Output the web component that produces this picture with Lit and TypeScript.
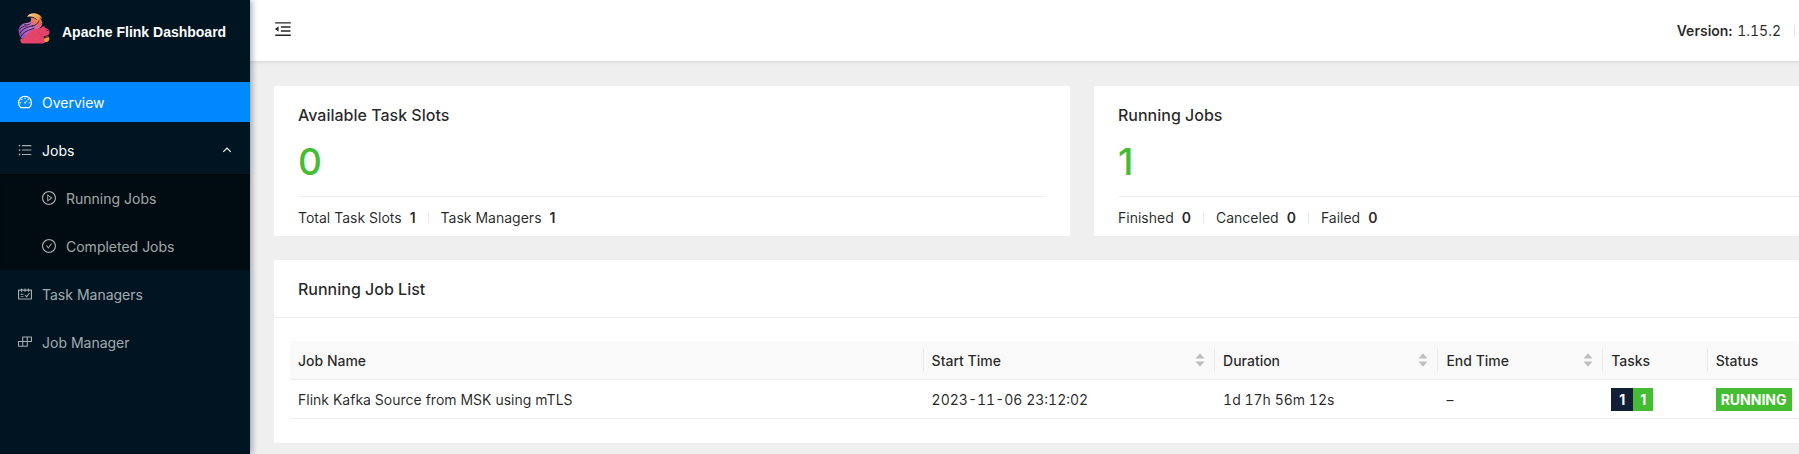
import { LitElement, html, css, svg } from "lit";
import { customElement, property, state } from "lit/decorators.js";

const RING =
  "M512 64C264.6 64 64 264.6 64 512s200.6 448 448 448 448-200.6 448-448S759.4 64 512 64zm0 820c-205.4 0-372-166.6-372-372s166.6-372 372-372 372 166.6 372 372-166.6 372-372 372z";

const ICONS: Record<string, unknown> = {
  dashboard: svg`<path d="M924.8 385.6a446.7 446.7 0 00-96-142.4 446.7 446.7 0 00-142.4-96C631.1 123.8 572.5 112 512 112s-119.1 11.8-174.4 35.2a446.7 446.7 0 00-142.4 96 446.7 446.7 0 00-96 142.4C75.8 440.9 64 499.5 64 560c0 132.7 58.3 257.7 159.9 343.1l1.7 1.4c5.8 4.8 13.1 7.5 20.6 7.5h531.7c7.5 0 14.8-2.7 20.6-7.5l1.7-1.4C901.7 817.7 960 692.7 960 560c0-60.5-11.9-119.1-35.2-174.4zM761.4 836H262.6A371.12 371.12 0 01140 560c0-99.4 38.7-192.8 109-263 70.3-70.3 163.7-109 263-109 99.4 0 192.8 38.7 263 109 70.3 70.3 109 163.7 109 263 0 105.6-44.5 205.5-122.6 276zM623.5 421.5a8.03 8.03 0 00-11.3 0L527.7 506c-18.7-5-39.4-.2-54.1 14.5a55.95 55.95 0 000 79.2 55.95 55.95 0 0079.2 0 55.87 55.87 0 0014.5-54.1l84.5-84.5c3.1-3.1 3.1-8.2 0-11.3l-28.3-28.3zM490 320h44c4.4 0 8-3.6 8-8v-80c0-4.4-3.6-8-8-8h-44c-4.4 0-8 3.6-8 8v80c0 4.4 3.6 8 8 8zm260 218v44c0 4.4 3.6 8 8 8h80c4.4 0 8-3.6 8-8v-44c0-4.4-3.6-8-8-8h-80c-4.4 0-8 3.6-8 8zm12.7-197.2l-31.1-31.1a8.03 8.03 0 00-11.3 0l-56.6 56.6a8.03 8.03 0 000 11.3l31.1 31.1c3.1 3.1 8.2 3.1 11.3 0l56.6-56.6c3.1-3.1 3.1-8.2 0-11.3zm-458.6-31.1a8.03 8.03 0 00-11.3 0l-31.1 31.1a8.03 8.03 0 000 11.3l56.6 56.6c3.1 3.1 8.2 3.1 11.3 0l31.1-31.1c3.1-3.1 3.1-8.2 0-11.3l-56.6-56.6zM262 530h-80c-4.4 0-8 3.6-8 8v44c0 4.4 3.6 8 8 8h80c4.4 0 8-3.6 8-8v-44c0-4.4-3.6-8-8-8z"/>`,
  bars: svg`<path d="M320 192h600v72H320zM320 476h600v72H320zM320 760h600v72H320zM104 228a56 56 0 10112 0 56 56 0 10-112 0zm0 284a56 56 0 10112 0 56 56 0 10-112 0zm0 284a56 56 0 10112 0 56 56 0 10-112 0z"/>`,
  play: svg`<path d=${RING}/><path d="M719.4 499.1l-296.1-215A15.9 15.9 0 00398 297v430c0 13.1 14.8 20.5 25.3 12.9l296.1-215a15.9 15.9 0 000-25.8zm-257.6 134V390.9L628.5 512 461.8 633.1z"/>`,
  check: svg`<path d=${RING}/><path d="M699 353h-46.9c-10.2 0-19.9 4.9-25.9 13.3L469 584.3l-71.2-98.8c-6-8.3-15.6-13.3-25.9-13.3H325c-6.5 0-10.3 7.4-6.5 12.7l124.6 172.8a31.8 31.8 0 0051.7 0l210.6-292c3.9-5.3.1-12.7-6.4-12.7z"/>`,
  schedule: svg`<path d="M928 224H768v-64h-72v64H548v-64h-72v64H328v-64h-72v64H96c-17.7 0-32 14.3-32 32v576c0 17.7 14.3 32 32 32h832c17.7 0 32-14.3 32-32V256c0-17.7-14.3-32-32-32zm-40 568H136V296h120v64h72v-64h148v64h72v-64h148v64h72v-64h120v496zM416 496H232v56h184zM416 632H232v56h184zM815 452h-45a32 32 0 00-26 13L616 643l-53-73a32 32 0 00-26-13h-45c-6 0-10 7-6 13l104 144a32 32 0 0052 0l180-249c4-6 0-13-7-13z"/>`,
  build: svg`<path fill-rule="evenodd" d="M928 160H364c-17.700 0-32 14.300-32 32v252H96c-17.700 0-32 14.300-32 32v308c0 17.700 14.300 32 32 32h564c17.700 0 32-14.300 32-32V512h236c17.700 0 32-14.300 32-32V192c0-17.700-14.300-32-32-32zM332 748H132V512h200zM624 748H400V512h224zM624 444H400V228h224zM892 444H692V228h200z"/>`,
  fold: svg`<path d="M408 442h480c4.400 0 8-3.600 8-8v-56c0-4.400-3.600-8-8-8H408c-4.400 0-8 3.600-8 8v56c0 4.400 3.600 8 8 8zm-8 204c0 4.400 3.600 8 8 8h480c4.400 0 8-3.600 8-8v-56c0-4.400-3.600-8-8-8H408c-4.400 0-8 3.600-8 8v56zm504-486H120c-4.400 0-8 3.600-8 8v56c0 4.400 3.600 8 8 8h784c4.400 0 8-3.600 8-8v-56c0-4.400-3.600-8-8-8zm0 632H120c-4.400 0-8 3.600-8 8v56c0 4.400 3.600 8 8 8h784c4.400 0 8-3.600 8-8v-56c0-4.400-3.600-8-8-8zM115.400 518.900L271.700 642c5.800 4.600 14.400.5 14.400-6.900V388.900c0-7.400-8.500-11.500-14.400-6.900L115.400 505.100a8.740 8.740 0 000 13.800z"/>`,
  chevron: svg`<path d="M132 700L512 320l380 380" fill="none" stroke="currentColor" stroke-width="110"/>`,
  caretUp: svg`<path d="M858.900 689L530.500 308.200c-9.400-10.900-27.500-10.900-37 0L165.100 689c-12.200 14.200-1.200 35 18.500 35h656.800c19.700 0 30.700-20.800 18.500-35z"/>`,
  caretDown: svg`<path d="M840.400 300H183.600c-19.700 0-30.700 20.800-18.500 35l328.400 380.800c9.400 10.900 27.500 10.900 37 0L858.900 335c12.200-14.200 1.200-35-18.500-35z"/>`,
};

@customElement("ui-icon")
class UiIcon extends LitElement {
  @property() name = "";
  static styles = css`
    :host {
      display: inline-flex;
      width: 16px;
      height: 16px;
      flex: none;
    }
    svg {
      width: 100%;
      height: 100%;
      fill: currentColor;
    }
  `;
  render() {
    return html`<svg viewBox="0 0 1024 1024" aria-hidden="true">${ICONS[this.name]}</svg>`;
  }
}

@customElement("flink-logo")
class FlinkLogo extends LitElement {
  static styles = css`
    :host {
      display: block;
      width: 32px;
      height: 32px;
      flex: none;
    }
    svg {
      display: block;
      width: 100%;
      height: 100%;
    }
  `;
  render() {
    return html`<svg viewBox="0 0 64 64" role="img" aria-label="Flink">
      <defs>
        <linearGradient id="tail" x1="0" y1="0.8" x2="1" y2="0.1">
          <stop offset="0" stop-color="#8a48b4" />
          <stop offset="0.5" stop-color="#c07ad6" />
          <stop offset="0.8" stop-color="#e0607a" />
          <stop offset="1" stop-color="#ef7a52" />
        </linearGradient>
        <linearGradient id="tip" x1="0" y1="0" x2="1" y2="0.7">
          <stop offset="0" stop-color="#f8dca0" />
          <stop offset="0.6" stop-color="#f2a14c" />
          <stop offset="1" stop-color="#dd5f3c" />
        </linearGradient>
      </defs>
      <path d="M8 54C1 47-1 36 4 29c4-6 11-7 18-8 4-1 5-5 3-10l18 2c6 4 7 10 4 15-3 6-12 8-19 13-8 5-10 13-20 13z" fill="url(#tail)" />
      <path d="M18 10C20 4 28 1 36 3c6 1 11 5 12 11l-4-2c4 5 5 10 2 15l-5-7c0 4-1 7-4 9 0-7-2-13-6-16-4-3-8-4-13-3z" fill="url(#tip)" />
      <path d="M26 13c5 5 5 11 1 15 4-1 8-4 9-9 0-4-4-7-10-6z" fill="#ef7a46" />
      <path d="M4 43c4-10 14-12 26-16M6 49c5-10 14-12 27-17M13 25c5 2 9 1 12-2M27 29c8-2 13-6 15-12M19 11c6-2 13-1 18 4M3 35c3-5 8-7 14-7" fill="none" stroke="#2a1838" stroke-width="2" />
      <path d="M12 63c-6 0-8-4-7-9 6 0 10-4 13-9 5-7 13-12 24-12 4 0 5-2 7-4 3-1 5 0 5 3 6 1 10 4 9 9 0 5-4 7-9 7-3 0-3 2-2 4 4 5 3 11-2 11z" fill="#e6436a" />
      <path d="M41 40c1 3 3 5 8 6M46 50c3 0 5 1 7 3" fill="none" stroke="#b02f58" stroke-width="1" />
      <path d="M57 37h4" stroke="#2a1020" stroke-width="2" />
      <path d="M52 55c1-6 6-8 10-5 2 4 0 9-4 10-4 1-6-1-6-5z" fill="#ee9a3a" />
      <path d="M52 53c2-5 7-6 11-3z" fill="#5b2a20" />
    </svg>`;
  }
}

@customElement("side-menu")
class SideMenu extends LitElement {
  @state() private open = true;

  static styles = css`
    :host {
      display: block;
      background: #001421;
      border-bottom: 1px solid #000c17;
      box-shadow: 2px 0 6px rgba(0, 21, 41, 0.35);
      box-sizing: border-box;
      z-index: 2;
    }
    .brand {
      display: flex;
      align-items: center;
      gap: 12px;
      height: 62px;
      padding: 0 18px;
      margin: 0 0 16px;
      box-sizing: border-box;
      color: #fff;
      text-decoration: none;
      font: 700 14px/22px "Liberation Sans", Arial, sans-serif;
    }
    .brand-logo {
      margin-top: -6px;
    }
    .brand-name {
      padding-top: 2px;
    }
    ul {
      list-style: none;
      margin: 0;
      padding: 0;
    }
    .row {
      padding: 4px 0;
    }
    .item {
      display: flex;
      align-items: center;
      gap: 9px;
      width: 100%;
      height: 40px;
      padding: 0 18px 0 17px;
      border: 0;
      box-sizing: border-box;
      background: none;
      color: rgba(255, 255, 255, 0.65);
      font: 400 14px/22px Inter, sans-serif;
      text-align: left;
      text-decoration: none;
      cursor: pointer;
    }
    .label {
      padding-top: 2px;
    }
    .item.selected {
      background: #0088ff;
      color: #fff;
    }
    .item.parent .label {
      flex: 1;
      color: #fff;
    }
    .arrow {
      width: 10px;
      height: 10px;
      color: #fff;
    }
    .sub {
      background: #000c11;
      box-shadow: inset 0 4px 4px -3px rgba(0, 0, 0, 0.45);
    }
    .sub .item {
      padding-left: 41px;
    }
  `;

  private link(icon: string, label: string, selected = false) {
    return html`<li class="row">
      <a class="item ${selected ? "selected" : ""}" href="#"><ui-icon name=${icon}></ui-icon><span class="label">${label}</span></a>
    </li>`;
  }

  render() {
    return html`
      <a class="brand" href="#"><flink-logo class="brand-logo"></flink-logo><span class="brand-name">Apache Flink Dashboard</span></a>
      <nav aria-label="Main">
        <ul>
          ${this.link("dashboard", "Overview", true)}
          <li>
            <div class="row">
              <button class="item parent" aria-expanded=${this.open} @click=${() => (this.open = !this.open)}>
                <ui-icon name="bars"></ui-icon><span class="label">Jobs</span><ui-icon class="arrow" name="chevron"></ui-icon>
              </button>
            </div>
            ${this.open ? html`<ul class="sub">${this.link("play", "Running Jobs")}${this.link("check", "Completed Jobs")}</ul>` : ""}
          </li>
          ${this.link("schedule", "Task Managers")} ${this.link("build", "Job Manager")}
        </ul>
      </nav>
    `;
  }
}

@customElement("stat-card")
class StatCard extends LitElement {
  @property() heading = "";
  @property({ type: Number }) value = 0;
  @property({ attribute: false }) details: [string, number][] = [];

  static styles = css`
    :host {
      display: block;
      background: #fff;
      border-radius: 2px;
      padding: 17px 24px 7px;
    }
    h2 {
      margin: 0;
      font-size: 16px;
      font-weight: 500;
      line-height: 24px;
    }
    .value {
      margin: 10px 0 9px;
      color: #44bd32;
      font-size: 37px;
      font-weight: 500;
      line-height: 50px;
    }
    .details {
      display: flex;
      align-items: center;
      border-top: 1px solid #eeeeee;
      padding-top: 10px;
      line-height: 22px;
    }
    .detail {
      display: flex;
      align-items: center;
    }
    .detail + .detail::before {
      content: "";
      width: 1px;
      height: 12px;
      margin: 0 12px;
      background: #eaeaea;
    }
    strong {
      margin-left: 8px;
      font-weight: 600;
    }
  `;

  render() {
    return html`
      <h2>${this.heading}</h2>
      <div class="value">${this.value}</div>
      <div class="details">
        ${this.details.map(([label, count]) => html`<span class="detail">${label}<strong>${count}</strong></span>`)}
      </div>
    `;
  }
}

@customElement("job-list")
class JobList extends LitElement {
  static styles = css`
    :host {
      display: block;
      background: #fff;
      border-radius: 2px;
    }
    h2 {
      margin: 0 0 -1px;
      padding: 17px 24px 16px;
      border-bottom: 1px solid #eeeeee;
      font-size: 16px;
      font-weight: 500;
      line-height: 24px;
    }
    .body {
      padding: 24px 16px;
    }
    table {
      width: 100%;
      table-layout: fixed;
      border-collapse: separate;
      border-spacing: 0;
    }
    .name {
      width: 40%;
    }
    .start {
      width: 18.4%;
    }
    .duration {
      width: 14.1%;
    }
    .end {
      width: 10.4%;
    }
    .tasks {
      width: 6.6%;
    }
    .state {
      width: 10.5%;
    }
    th,
    td {
      padding: 8px;
      border-bottom: 1px solid #eeeeee;
      line-height: 22px;
      text-align: left;
      white-space: nowrap;
    }
    td {
      padding: 9px 8px 7px;
    }
    td.badge-cell {
      padding: 8px 8px 7px;
    }
    .time {
      font-variant-numeric: tabular-nums;
    }
    th {
      padding-right: 0;
      background: #f9f9f9;
      font-weight: 500;
    }
    .head {
      display: flex;
      align-items: center;
      justify-content: space-between;
      height: 22px;
      padding-right: 8px;
      border-right: 1px solid #e8e8e8;
    }
    .title {
      padding-top: 2px;
    }
    th:last-child .head {
      border: 0;
    }
    .sort {
      display: flex;
      flex-direction: column;
      align-items: center;
      padding: 0;
      border: 0;
      background: none;
      color: #bfbfbf;
      cursor: pointer;
    }
    .caret {
      width: 12px;
      height: 12px;
    }
    .caret + .caret {
      margin-top: -4px;
    }
    .badges {
      display: flex;
    }
    .badge {
      padding: 1px 7px 0;
      background: #44bd32;
      color: #fff;
      font-weight: 700;
      line-height: 22px;
    }
    .badge.total {
      padding: 1px 8px 0;
      background: #112036;
    }
    .badge.status {
      padding: 1px 5px 0;
    }
  `;

  private column(label: string, sortable = false) {
    return html`<th scope="col">
      <div class="head">
        <span class="title">${label}</span>
        ${sortable
          ? html`<button class="sort" aria-label="Sort by ${label}">
              <ui-icon class="caret" name="caretUp"></ui-icon><ui-icon class="caret" name="caretDown"></ui-icon>
            </button>`
          : ""}
      </div>
    </th>`;
  }

  render() {
    return html`
      <h2>Running Job List</h2>
      <div class="body">
        <table>
          <colgroup>
            <col class="name" /><col class="start" /><col class="duration" /><col class="end" /><col class="tasks" /><col class="state" />
          </colgroup>
          <thead>
            <tr>
              ${this.column("Job Name")} ${this.column("Start Time", true)} ${this.column("Duration", true)}
              ${this.column("End Time", true)} ${this.column("Tasks")} ${this.column("Status")}
            </tr>
          </thead>
          <tbody>
            <tr>
              <td>Flink Kafka Source from MSK using mTLS</td>
              <td class="time">2023-11-06 23:12:02</td>
              <td class="time">1d 17h 56m 12s</td>
              <td class="time">–</td>
              <td class="badge-cell"><div class="badges"><span class="badge total">1</span><span class="badge">1</span></div></td>
              <td class="badge-cell"><div class="badges"><span class="badge status">RUNNING</span></div></td>
            </tr>
          </tbody>
        </table>
      </div>
    `;
  }
}

@customElement("app-root")
class AppRoot extends LitElement {
  static styles = css`
    :host {
      display: block;
      overflow: hidden;
      color: rgba(0, 0, 0, 0.85);
      font: 400 14px/22px Inter, sans-serif;
    }
    /* The dashboard is wider than the viewport and runs past its right edge. */
    .layout {
      display: grid;
      grid-template-columns: 250px minmax(0, 1fr);
      width: calc(100% + 115px);
      min-height: 100vh;
      background: #efefef;
    }
    .page {
      display: flex;
      flex-direction: column;
    }
    header {
      display: flex;
      align-items: center;
      justify-content: space-between;
      height: 61px;
      padding: 0 119px 0 23px;
      background: #fff;
      box-shadow: 0 1px 4px rgba(0, 21, 41, 0.12);
    }
    .toggle {
      display: flex;
      padding: 0;
      border: 0;
      margin-bottom: 4px;
      background: none;
      color: rgba(0, 0, 0, 0.85);
      cursor: pointer;
    }
    .toggle ui-icon {
      width: 20px;
      height: 20px;
    }
    .version {
      display: flex;
      align-items: center;
      gap: 5px;
      font-variant-numeric: tabular-nums;
    }
    .version b {
      font-weight: 600;
    }
    .version::after {
      content: "";
      width: 1px;
      height: 12px;
      margin-left: 8px;
      background: #e8e8e8;
    }
    main {
      display: grid;
      grid-template-columns: 1fr 1fr;
      gap: 24px;
      padding: 25px 24px 11px;
    }
    job-list {
      grid-column: 1 / -1;
    }
  `;

  render() {
    return html`
      <div class="layout">
        <side-menu></side-menu>
        <div class="page">
          <header>
            <button class="toggle" aria-label="Collapse menu"><ui-icon name="fold"></ui-icon></button>
            <div class="version"><b>Version:</b><span>1.15.2</span></div>
          </header>
          <main>
            <stat-card heading="Available Task Slots" .value=${0} .details=${[["Total Task Slots", 1], ["Task Managers", 1]]}></stat-card>
            <stat-card heading="Running Jobs" .value=${1} .details=${[["Finished", 0], ["Canceled", 0], ["Failed", 0]]}></stat-card>
            <job-list></job-list>
          </main>
        </div>
      </div>
    `;
  }
}
